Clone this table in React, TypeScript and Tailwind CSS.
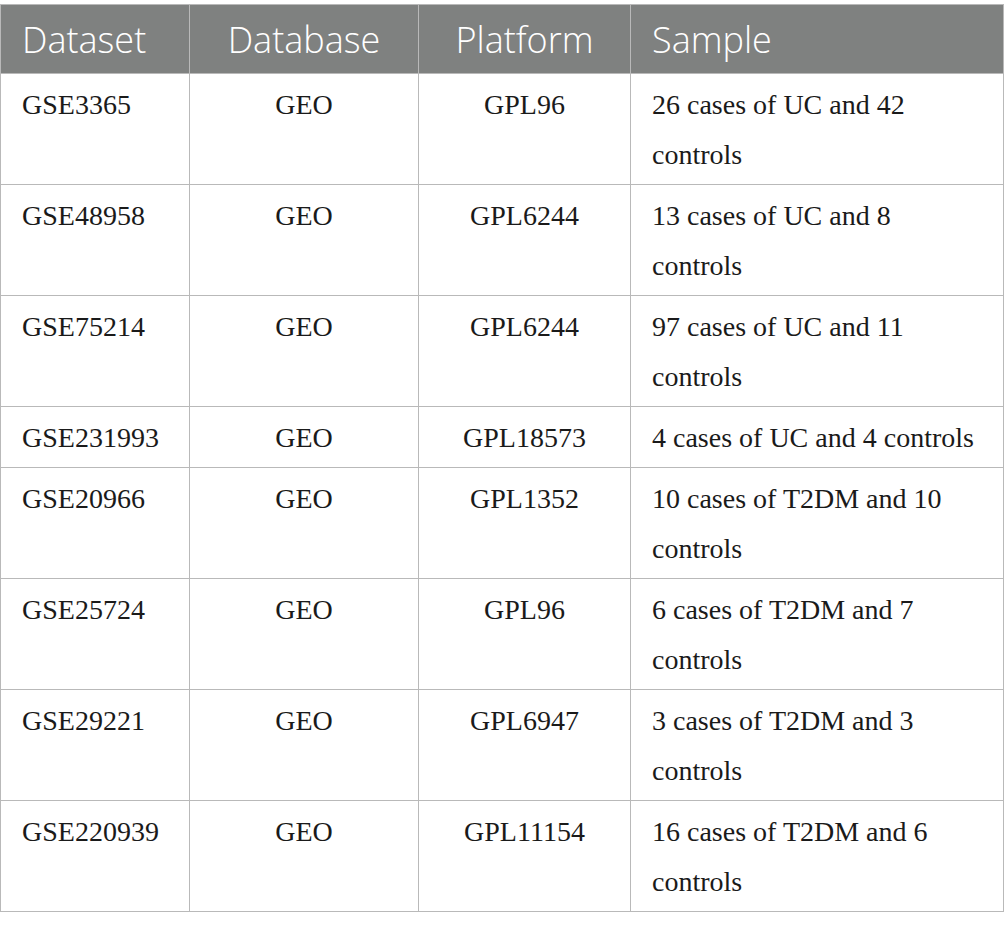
const rows = [
  { dataset: "GSE3365", platform: "GPL96", sample: "26 cases of UC and 42 controls" },
  { dataset: "GSE48958", platform: "GPL6244", sample: "13 cases of UC and 8 controls" },
  { dataset: "GSE75214", platform: "GPL6244", sample: "97 cases of UC and 11 controls" },
  { dataset: "GSE231993", platform: "GPL18573", sample: "4 cases of UC and 4 controls" },
  { dataset: "GSE20966", platform: "GPL1352", sample: "10 cases of T2DM and 10 controls" },
  { dataset: "GSE25724", platform: "GPL96", sample: "6 cases of T2DM and 7 controls" },
  { dataset: "GSE29221", platform: "GPL6947", sample: "3 cases of T2DM and 3 controls" },
  { dataset: "GSE220939", platform: "GPL11154", sample: "16 cases of T2DM and 6 controls" },
];

export default function App() {
  return (
    <div className="w-[1004px] bg-white pt-1">
      <table className="w-full table-fixed border-collapse">
        <colgroup>
          <col className="w-[189px]" />
          <col className="w-[229px]" />
          <col className="w-[212px]" />
          <col />
        </colgroup>
        <thead>
          <tr className="bg-[#7f8180] font-[family-name:Open_Sans,sans-serif] text-[36px] leading-[50px] text-white">
            <th className="border border-[#b9b9b9] pt-[10px] pb-[8px] pl-[21px] text-left font-light">Dataset</th>
            <th className="border border-[#b9b9b9] pt-[10px] pb-[8px] text-center font-light">Database</th>
            <th className="border border-[#b9b9b9] pt-[10px] pb-[8px] text-center font-light">Platform</th>
            <th className="border border-[#b9b9b9] pt-[10px] pb-[8px] pl-[21px] text-left font-light">Sample</th>
          </tr>
        </thead>
        <tbody className="font-[family-name:Liberation_Serif,serif] text-[28px] leading-[50px] text-[#1a1a1a]">
          {rows.map((r) => (
            <tr key={r.dataset}>
              <td className="border border-[#b9b9b9] pt-[6px] pb-[4px] pl-[21px] align-top">{r.dataset}</td>
              <td className="border border-[#b9b9b9] pt-[6px] pb-[4px] text-center align-top">GEO</td>
              <td className="border border-[#b9b9b9] pt-[6px] pb-[4px] text-center align-top">{r.platform}</td>
              <td className="border border-[#b9b9b9] pt-[6px] pb-[4px] pl-[21px] pr-[21px] align-top">{r.sample}</td>
            </tr>
          ))}
        </tbody>
      </table>
    </div>
  );
}
